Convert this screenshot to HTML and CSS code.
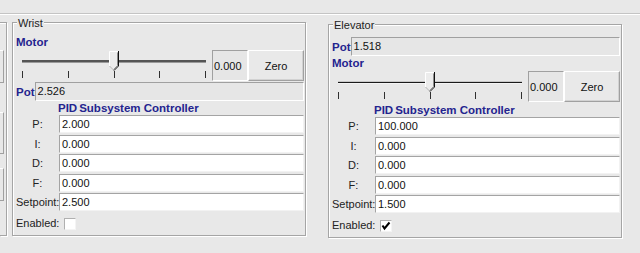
FILE: index.html
```html
<!DOCTYPE html>
<html>
<head>
<meta charset="utf-8">
<title>Subsystems</title>
<link rel="stylesheet" href="styles.css">
</head>
<body>
<div class="topbar"></div>
<div class="main">
  <div class="stub">
    <div class="stub-btn b1"></div>
    <div class="stub-btn b2"></div>
    <div class="stub-btn b3"></div>
  </div>

  <section class="panel wrist">
    <div class="legend">Wrist</div>
    <div class="heading">Motor</div>
    <div class="motor-row">
      <div class="slider">
        <div class="track"></div>
        <svg class="thumb" width="10" height="20" viewBox="0 0 10 20">
          <polygon points="0,0 10,0 10,15 5,20 0,15" fill="#ececec"/>
          <polyline points="0.5,15 0.5,0.5 9,0.5" fill="none" stroke="#ffffff"/>
          <polyline points="0.5,15 5,19.5" fill="none" stroke="#b4b4b4"/>
          <polyline points="8.5,1.5 8.5,14.6 4.6,18.5" fill="none" stroke="#8c8c8c"/>
          <polyline points="9.5,0 9.5,15 5,19.5" fill="none" stroke="#111111"/>
        </svg>
        <div class="ticks"><i></i><i></i><i></i><i></i><i></i></div>
      </div>
      <div class="value">0.000</div>
      <div class="btn">Zero</div>
    </div>
    <div class="pot-row"><span class="heading">Pot</span><div class="ro-field">2.526</div></div>
    <div class="heading pid"><span class="pid-a">PID</span>Subsystem Controller</div>
    <div class="grid">
      <span class="lbl">P:</span><div class="field">2.000</div>
      <span class="lbl">I:</span><div class="field">0.000</div>
      <span class="lbl">D:</span><div class="field">0.000</div>
      <span class="lbl">F:</span><div class="field">0.000</div>
      <span class="lbl">Setpoint:</span><div class="field">2.500</div>
    </div>
    <div class="enabled"><span class="lbl">Enabled:</span><span class="check"></span></div>
  </section>

  <section class="panel elevator">
    <div class="legend">Elevator</div>
    <div class="pot-row"><span class="heading">Pot</span><div class="ro-field">1.518</div></div>
    <div class="heading">Motor</div>
    <div class="motor-row">
      <div class="slider">
        <div class="track thin"></div>
        <svg class="thumb" width="10" height="20" viewBox="0 0 10 20">
          <polygon points="0,0 10,0 10,15 5,20 0,15" fill="#ececec"/>
          <polyline points="0.5,15 0.5,0.5 9,0.5" fill="none" stroke="#ffffff"/>
          <polyline points="0.5,15 5,19.5" fill="none" stroke="#b4b4b4"/>
          <polyline points="8.5,1.5 8.5,14.6 4.6,18.5" fill="none" stroke="#8c8c8c"/>
          <polyline points="9.5,0 9.5,15 5,19.5" fill="none" stroke="#111111"/>
        </svg>
        <div class="ticks"><i></i><i></i><i></i><i></i><i></i></div>
      </div>
      <div class="value">0.000</div>
      <div class="btn">Zero</div>
    </div>
    <div class="heading pid"><span class="pid-a">PID</span>Subsystem Controller</div>
    <div class="grid">
      <span class="lbl">P:</span><div class="field">100.000</div>
      <span class="lbl">I:</span><div class="field">0.000</div>
      <span class="lbl">D:</span><div class="field">0.000</div>
      <span class="lbl">F:</span><div class="field">0.000</div>
      <span class="lbl">Setpoint:</span><div class="field">1.500</div>
    </div>
    <div class="enabled"><span class="lbl">Enabled:</span><span class="check"><svg width="12" height="12" viewBox="0 0 12 12"><polyline points="2.5,5.5 4.5,8.5 9.5,2.5" fill="none" stroke="#000" stroke-width="2"/></svg></span></div>
  </section>
</div>
</body>
</html>
```
FILE: styles.css
```css
* { box-sizing: border-box; }
html, body { margin: 0; height: 100%; }
body {
  background: #e8e8e8;
  font-family: "Liberation Sans", Arial, sans-serif;
  font-size: 11px;
  color: #111;
  overflow: hidden;
}
.topbar {
  height: 14px;
  border-bottom: 1px solid #c4c4c4;
  box-shadow: 0 1px 0 #fff;
}
.main {
  display: flex;
  align-items: flex-start;
}
.stub {
  width: 7px;
  height: 214px;
  margin-top: 8px;
  border: 1px solid #a5a5a5;
  border-left: 0;
  box-shadow: 1px 1px 0 #fff, inset 0 1px 0 #fff;
  display: flex;
  flex-direction: column;
}
.stub-btn {
  width: 4px;
  border-top: 1px solid #fff;
  border-right: 1px solid #a0a0a0;
  border-bottom: 1px solid #a0a0a0;
}
.b1 { margin-top: 27px; height: 33px; }
.b2 { margin-top: 29px; height: 42px; }
.b3 { margin-top: 14px; height: 33px; }

.panel {
  width: 294px;
  height: 214px;
  border: 1px solid #a5a5a5;
  box-shadow: inset 1px 1px 0 #fff, 1px 1px 0 #fff;
  padding: 12px 1px 0 3px;
}
.wrist { margin: 8px 0 0 5px; }
.elevator { margin: 10px 0 0 22px; }

.legend {
  width: fit-content;
  margin: -18px 0 5px 1px;
  padding: 0 1px;
  line-height: 13px;
  background: #e8e8e8;
  color: #222;
}
.heading {
  font-weight: bold;
  font-size: 11.5px;
  line-height: 14px;
  color: #24248f;
}
.motor-row {
  display: flex;
  height: 31px;
  margin-top: 1px;
}
.slider {
  flex: 1;
  position: relative;
}
.track {
  margin: 10px 6px 0;
  height: 2px;
  background: #555;
  border-bottom: 1px solid #9a9a9a;
  height: 3px;
}
.track.thin {
  background: #1a1a1a;
  border-top: 1px solid #c8c8c8;
  border-bottom: 1px solid #f4f4f4;
}
.thumb {
  position: absolute;
  left: 93px;
  top: 1px;
}
.ticks {
  display: flex;
  justify-content: space-between;
  padding: 0 6px;
  margin-top: 8px;
}
.ticks i {
  display: block;
  width: 1px;
  height: 7px;
  background: #303030;
}
.value {
  width: 36px;
  border: 1px solid;
  border-color: #a0a0a0 #fff #fff #a0a0a0;
  background: #e6e6e6;
  padding-left: 1px;
  display: flex;
  align-items: center;
}
.btn {
  width: 56px;
  border: 1px solid;
  border-color: #fff #a0a0a0 #a0a0a0 #fff;
  box-shadow: inset -1px -1px 0 #d2d2d2;
  background: #e9e9e9;
  display: flex;
  align-items: center;
  justify-content: center;
  color: #111;
}
.pot-row {
  display: flex;
  height: 19px;
  align-items: center;
}
.wrist .pot-row { margin-top: 1px; }
.ro-field {
  flex: 1;
  height: 19px;
  border: 1px solid;
  border-color: #a0a0a0 #fff #fff #a0a0a0;
  background: #e6e6e6;
  padding-left: 2px;
  line-height: 17px;
}
.pid { padding-left: 42px; }
.elevator .pid { margin-top: 1px; }
.pid-a { margin-right: 2px; }
.grid {
  display: grid;
  grid-template-columns: 43px 1fr;
  grid-auto-rows: 18px;
  row-gap: 1.5px;
}
.lbl {
  color: #222;
  text-align: center;
  line-height: 18px;
  white-space: nowrap;
}
.field {
  background: #fff;
  border: 1px solid;
  border-color: #a4a4a4 #f2f2f2 #f2f2f2 #a4a4a4;
  padding-left: 2px;
  line-height: 16px;
  color: #111;
}
.enabled {
  display: flex;
  align-items: center;
  gap: 5px;
  margin-top: 6px;
  height: 13px;
}
.enabled .lbl { line-height: 13px; }
.check {
  width: 12px;
  height: 12px;
  background: #fff;
  border: 1px solid;
  border-color: #b0b0b0 #f4f4f4 #f4f4f4 #b0b0b0;
  display: block;
  position: relative;
}
.check svg {
  position: absolute;
  left: -1px;
  top: -1px;
}
```
